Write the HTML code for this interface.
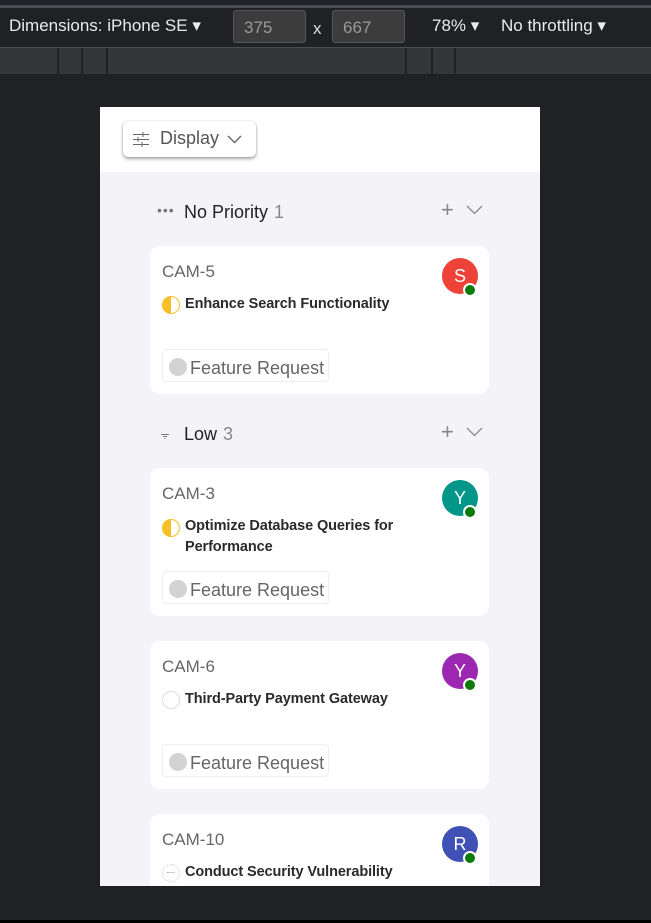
<!DOCTYPE html><html><head><style>
*{margin:0;padding:0;box-sizing:border-box}
body{width:651px;height:923px;background:#202124;position:relative;overflow:hidden;font-family:"Liberation Sans",sans-serif}
.a{position:absolute}
.tb{color:#e8eaed;font-size:17px;top:16px}
.inp{top:10px;height:33px;border:1px solid #555;background:#3c3c3c;border-radius:3px;color:#999;font-size:17px;padding:7px 0 0 10px}
.card{position:absolute;left:150px;width:339px;background:#fff;border-radius:10px}
.id{position:absolute;left:12px;top:16px;font-size:17px;color:#666}
.ttl{position:absolute;left:35px;font-size:14.5px;font-weight:bold;color:#2a2a2a;line-height:21px;width:240px;letter-spacing:-0.1px}
.av{position:absolute;left:292px;top:12px;width:36px;height:36px;border-radius:50%;color:#fff;font-size:18px;text-align:center;line-height:36px}
.dot{position:absolute;left:313px;top:37px;width:14px;height:14px;border-radius:50%;background:#0a7a0a;border:2px solid #fff}
.tag{position:absolute;left:12px;top:103px;width:167px;height:33px;border:1px solid #eee;border-radius:4px;font-size:18px;color:#666;padding:8px 0 0 27px}
.tag:before{content:"";position:absolute;left:6px;top:8px;width:18px;height:18px;border-radius:50%;background:#d3d3d3}
.st{position:absolute;left:12px;width:18px;height:18px;border-radius:50%}
.gh{position:absolute;left:156px;font-size:18px;color:#222}
.gh span{color:#888;margin-left:6px}
.pl{position:absolute;left:441px;font-size:22px;color:#888;font-weight:300}
</style></head><body>
<div class="a" style="left:0;top:5px;width:651px;height:3px;background:#494c50"></div>
<div class="a tb" style="left:9px">Dimensions: iPhone SE ▾</div>
<div class="a inp" style="left:233px;width:73px">375</div>
<div class="a tb" style="left:313px;top:19px;color:#ddd">x</div>
<div class="a inp" style="left:332px;width:73px">667</div>
<div class="a tb" style="left:432px">78% ▾</div>
<div class="a tb" style="left:501px">No throttling ▾</div>
<div class="a" style="left:0;top:47px;width:651px;height:1px;background:#494c50"></div>
<div class="a" style="left:0;top:48px;width:651px;height:26px;background:#35363a"></div>
<div class="a" style="left:57px;top:48px;width:2px;height:26px;background:#202124"></div>
<div class="a" style="left:81px;top:48px;width:2px;height:26px;background:#202124"></div>
<div class="a" style="left:106px;top:48px;width:2px;height:26px;background:#202124"></div>
<div class="a" style="left:405px;top:48px;width:2px;height:26px;background:#202124"></div>
<div class="a" style="left:431px;top:48px;width:2px;height:26px;background:#202124"></div>
<div class="a" style="left:454px;top:48px;width:2px;height:26px;background:#202124"></div>
<div class="a" style="left:0;top:920px;width:651px;height:3px;background:#000"></div>

<div class="a" style="left:100px;top:107px;width:440px;height:779px;background:#f4f4f8;overflow:hidden">
<div class="a" style="left:0;top:0;width:440px;height:65px;background:#fff"></div>
<div class="a" style="left:23px;top:14px;width:133px;height:36px;background:#fff;border-radius:5px;box-shadow:0 2px 3px rgba(0,0,0,.35),0 0 1px rgba(0,0,0,.3);font-size:18px;color:#555;padding:7px 0 0 37px">Display
<svg class="a" style="left:10px;top:11px" width="16" height="15" viewBox="0 0 16 15" stroke="#666" fill="none"><path d="M0 2.5h16M0 7.5h16M0 12.5h16M10 0v5M5 5v5M9 10v5"/></svg>
<svg class="a" style="left:104px;top:14px" width="15" height="9" viewBox="0 0 15 9" stroke="#666" stroke-width="1.4" fill="none"><path d="M1 1l6.5 6.5L14 1"/></svg>
</div>
</div>

<div class="a" style="left:157px;top:202px;color:#777;font-size:14px;letter-spacing:1px">•••</div>
<div class="gh" style="left:184px;top:202px">No Priority<span>1</span></div>
<div class="pl" style="top:197px">+</div>
<svg class="a" style="left:466px;top:205px" width="17" height="10" viewBox="0 0 17 10" stroke="#888" stroke-width="1.3" fill="none"><path d="M1 1l7.5 7.5L16 1"/></svg>

<div class="card" style="top:246px;height:148px">
<div class="id">CAM-5</div>
<div class="st" style="top:50px;border:1.5px solid #f6bf26;background:linear-gradient(90deg,#f6bf26 50%,#fff 50%)"></div>
<div class="ttl" style="top:48px">Enhance Search Functionality</div>
<div class="av" style="background:#ee4138">S</div><div class="dot"></div>
<div class="tag">Feature Request</div>
</div>

<svg class="a" style="left:160px;top:432px" width="10" height="8" viewBox="0 0 10 8" fill="#777"><rect x="1" y="2" width="8" height="1"/><rect x="3" y="4" width="4" height="1"/><rect x="4.5" y="6" width="1" height="1"/></svg>
<div class="gh" style="left:184px;top:424px">Low<span>3</span></div>
<div class="pl" style="top:419px">+</div>
<svg class="a" style="left:466px;top:427px" width="17" height="10" viewBox="0 0 17 10" stroke="#888" stroke-width="1.3" fill="none"><path d="M1 1l7.5 7.5L16 1"/></svg>

<div class="card" style="top:468px;height:148px">
<div class="id">CAM-3</div>
<div class="st" style="top:51px;border:1.5px solid #f6bf26;background:linear-gradient(90deg,#f6bf26 50%,#fff 50%)"></div>
<div class="ttl" style="top:48px">Optimize Database Queries for Performance</div>
<div class="av" style="background:#009688">Y</div><div class="dot"></div>
<div class="tag">Feature Request</div>
</div>

<div class="card" style="top:641px;height:148px">
<div class="id">CAM-6</div>
<div class="st" style="top:50px;border:1.5px solid #ddd"></div>
<div class="ttl" style="top:48px">Third-Party Payment Gateway</div>
<div class="av" style="background:#9c27b0">Y</div><div class="dot"></div>
<div class="tag">Feature Request</div>
</div>

<div class="card" style="top:814px;height:72px;border-radius:10px 10px 0 0">
<div class="id">CAM-10</div>
<div class="st" style="top:50px;border:1.5px dotted #ccc"><div style="position:absolute;left:3px;top:7px;width:9px;height:1px;background:#ccc"></div></div>
<div class="ttl" style="top:48px;height:24px;overflow:hidden">Conduct Security Vulnerability Assessment</div>
<div class="av" style="background:#3f51b5">R</div><div class="dot"></div>
</div>
</body></html>
